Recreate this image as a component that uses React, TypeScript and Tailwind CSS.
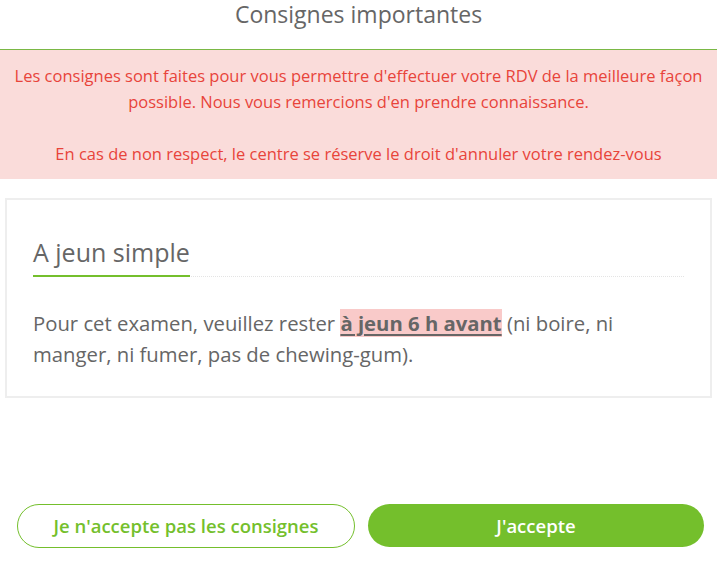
export default function App() {
  return (
    <div
      className="w-[717px] h-[564px] bg-white flex flex-col overflow-hidden"
      style={{ fontFamily: '"Open Sans", sans-serif' }}
    >
      {/* Header */}
      <div className="h-[50px] border-b border-[#7ab845] flex items-start justify-center">
        <h1 className="text-[23px] leading-[28px] text-[#666]">Consignes importantes</h1>
      </div>

      {/* Warning */}
      <div className="bg-[#fadcda] text-[#e8443a] text-[16.5px] leading-[26px] text-center px-[12px] pt-[13px] pb-[12px]">
        <p>
          Les consignes sont faites pour vous permettre d'effectuer votre RDV de la meilleure façon possible. Nous
          vous remercions d'en prendre connaissance.
        </p>
        <p className="mt-[26px]">En cas de non respect, le centre se réserve le droit d'annuler votre rendez-vous</p>
      </div>

      {/* Card */}
      <div className="mx-[5px] mt-[19px] border-2 border-[#eeeeee] px-[26px] pt-[35px] pb-[26px]">
        <div className="border-b border-dotted border-[#e4e4e4] flex">
          <h2 className="text-[25px] leading-[34px] text-[#666] pb-[6px] border-b-2 border-[#74bf2c] -mb-[1px]">
            A jeun simple
          </h2>
        </div>
        <p className="mt-[31px] text-[20.3px] leading-[31px] text-[#666]">
          Pour cet examen, veuillez rester{' '}
          <span className="bg-[#f9cac9] font-bold underline underline-offset-[3px]">à jeun 6 h avant</span>{' '}
          (ni boire, ni manger, ni fumer, pas de chewing-gum).
        </p>
      </div>

      {/* Buttons */}
      <div className="mt-auto mb-[16px] flex gap-[13px] pl-[17px] pr-[13px]">
        <button className="flex-1 h-[44px] rounded-full border border-[#74bf2c] text-[#74bf2c] text-[18.5px] font-semibold bg-white">
          Je n'accepte pas les consignes
        </button>
        <button className="flex-1 h-[43px] rounded-full bg-[#74bf2c] text-white text-[18.5px] font-semibold">
          J'accepte
        </button>
      </div>
    </div>
  );
}
